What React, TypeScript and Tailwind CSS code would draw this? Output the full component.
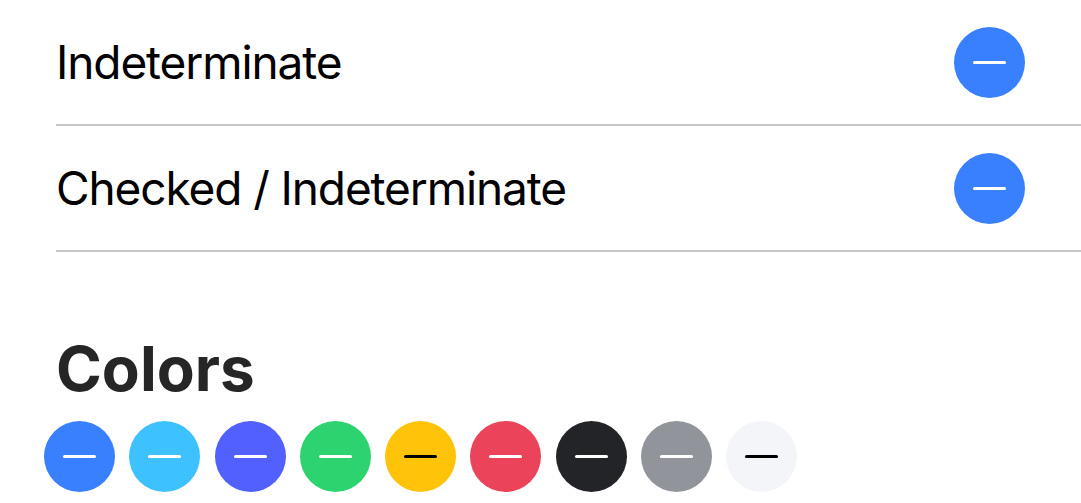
import React from 'react';

type Swatch = { bg: string; dash: string };

const swatches: Swatch[] = [
  { bg: 'bg-[#3880ff]', dash: 'bg-white' },
  { bg: 'bg-[#3dc2ff]', dash: 'bg-white' },
  { bg: 'bg-[#5260ff]', dash: 'bg-white' },
  { bg: 'bg-[#2dd36f]', dash: 'bg-white' },
  { bg: 'bg-[#ffc409]', dash: 'bg-black' },
  { bg: 'bg-[#eb445a]', dash: 'bg-white' },
  { bg: 'bg-[#222428]', dash: 'bg-white' },
  { bg: 'bg-[#92949c]', dash: 'bg-white' },
  { bg: 'bg-[#f4f5f8]', dash: 'bg-black' },
];

const Indeterminate: React.FC<{ bg?: string; dash?: string }> = ({
  bg = 'bg-[#3880ff]',
  dash = 'bg-white',
}) => (
  <div className={`flex h-[71px] w-[71px] shrink-0 items-center justify-center rounded-full ${bg}`}>
    <span className={`block h-[3px] w-[33px] rounded-full ${dash}`} />
  </div>
);

const Row: React.FC<{ label: string }> = ({ label }) => (
  <div className="flex h-[126px] items-center justify-between border-b-2 border-[#c8c7cc] pr-[56px]">
    <span className="text-[46px] leading-none tracking-[-0.024em] text-black">{label}</span>
    <Indeterminate />
  </div>
);

export default function App() {
  return (
    <div
      className="h-[503px] w-[1081px] overflow-hidden bg-white"
      style={{ fontFamily: 'Inter, "Noto Sans", sans-serif' }}
    >
      <div className="pl-[56px]">
        <Row label="Indeterminate" />
        <Row label="Checked / Indeterminate" />
      </div>
      <h2 className="mt-[86px] pl-[56px] text-[62px] font-bold leading-none text-[#262626]">
        Colors
      </h2>
      <div className="mt-[21px] flex gap-[14.3px] pl-[44px]">
        {swatches.map((s, i) => (
          <Indeterminate key={i} bg={s.bg} dash={s.dash} />
        ))}
      </div>
    </div>
  );
}
